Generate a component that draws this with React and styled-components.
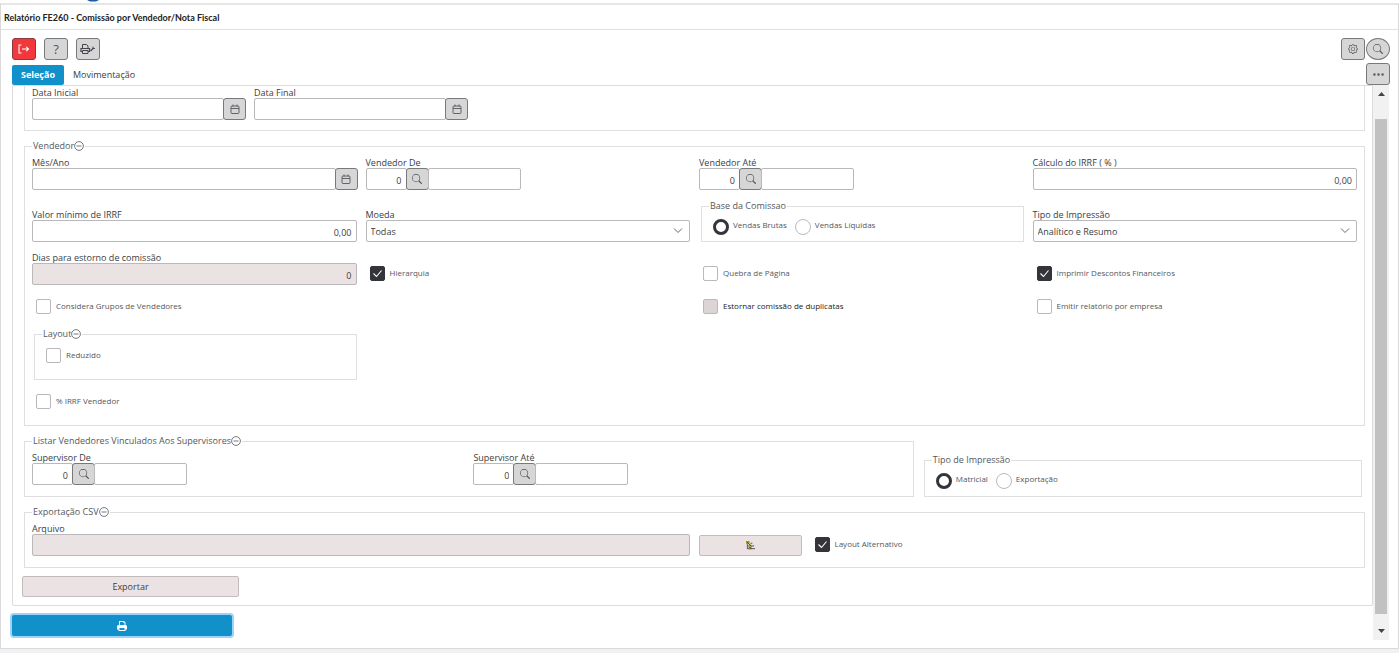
import React from 'react'
import styled, { createGlobalStyle } from 'styled-components'
import { BsGear, BsSearch, BsThreeDots } from 'react-icons/bs'

const GlobalStyle = createGlobalStyle`
    * {
        box-sizing: border-box;
    }
    body {
        margin: 0;
        background-color: #f1f1f4;
        font-family: "Open Sans", "Noto Sans", sans-serif;
        font-size: 9px;
        line-height: 12px;
        color: #3b3d42;
    }
    button, input, select {
        font: inherit;
        color: inherit;
        margin: 0;
    }
`

// Page
const TopStrip = styled.div`
    height: 3px;
    padding-left: 86px;
    background-color: #fff;
`
const LogoEdge = styled.svg`
    display: block;
`
const Window = styled.main`
    display: flex;
    flex-direction: column;
    min-height: calc(100vh - 7px);
    background-color: #fff;
    border: 1px solid #d9d9db;
    border-top: 2px solid #e6e6e7;
`
const TitleBar = styled.h1`
    margin: 0;
    padding: 7px 3px 5px;
    border-bottom: 1px solid #e1e1e3;
    font-family: Lato, sans-serif;
    font-size: 9px;
    line-height: 12px;
    font-weight: 700;
    color: #222;
`
const Toolbar = styled.div`
    display: flex;
    justify-content: space-between;
    padding: 8px 8px 0 11px;
`
const ToolGroup = styled.div`
    display: flex;
    gap: ${props => props.$gap || '1px'};
`
const ToolButton = styled.button`
    display: flex;
    align-items: center;
    justify-content: center;
    width: 24px;
    height: 22px;
    padding: 0;
    border: 1px solid ${props => (props.$danger ? '#8c3a3e' : '#77797d')};
    border-radius: ${props => (props.$round ? '50%' : '3px')};
    background-color: ${props => (props.$danger ? '#f2383c' : '#d6d6d6')};
    color: ${props => (props.$danger ? '#fff' : '#55575c')};
    font-size: 13px;
`
const TabBar = styled.div`
    display: flex;
    align-items: flex-end;
    justify-content: space-between;
    padding: 3px 8px 0 11px;
`
const Tabs = styled.div`
    display: flex;
`
const Tab = styled.button`
    height: 20px;
    padding: 0 9px;
    border: 0;
    border-radius: 2px;
    background-color: ${props => (props.$active ? '#1190ca' : 'transparent')};
    color: ${props => (props.$active ? '#fff' : '#3b3d42')};
    font-weight: ${props => (props.$active ? 700 : 400)};
`

// Scrolling area
const Body = styled.div`
    display: flex;
    flex: 1;
    padding: 0 9px 8px 11px;
`
const Content = styled.div`
    flex: 1;
    min-width: 0;
`
const Panel = styled.div`
    padding: 0 7px 8px 9px;
    border: 1px solid #dcdcde;
    border-radius: 0 0 2px 2px;
`
const Sections = styled.div`
    display: flex;
    flex-direction: column;
    gap: 8px;
    padding-left: 2px;
`
const Scrollbar = styled.div`
    display: flex;
    flex-direction: column;
    width: 16px;
    padding: 7px 2px;
    background-color: #f1f1f1;
`
const ScrollThumb = styled.div`
    flex: 1;
    margin: 23px 0 15px;
    background-color: #c1c1c1;
`
const ScrollArrow = styled.svg`
    display: block;
    margin: 0 auto;
`

// Form parts
const Group = styled.fieldset`
    min-width: 0;
    margin: 0;
    padding: 3px 7px ${props => props.$bottom || '11px'};
    border: 1px solid #dfdfe1;
`
const DateGroup = styled(Group)`
    display: flex;
    gap: 9px;
    padding-top: 0;
    border-top: 0;
`
const InnerGroup = styled(Group)`
    margin: 0 0 0 2px;
    padding-top: 2px;
`
const RadioFieldset = styled(Group)`
    margin: 0 0 0 ${props => props.$indent || '0'};
    padding-top: 6px;
`
const Legend = styled.legend`
    display: flex;
    align-items: center;
    height: 14px;
    padding: 0 1px;
    color: #55575c;
`
const ToggleButton = styled.button`
    display: flex;
    padding: 0;
    border: 0;
    background: none;
`
const Grid = styled.div`
    display: grid;
    grid-template-columns: repeat(${props => props.$cols || 4}, minmax(0, 1fr));
    gap: 9px;
    align-items: end;
`
const SideBySide = styled.div`
    display: grid;
    grid-template-columns: 67fr 33fr;
    align-items: end;
    gap: 10px;
    padding-right: 3px;
`
const Field = styled.div`
    width: ${props => props.$width || 'auto'};
`
const Label = styled.label`
    display: block;
    height: 12px;
    line-height: 14px;
    white-space: nowrap;
`
const InputLine = styled.div`
    display: flex;
`
const Input = styled.input`
    flex: ${props => (props.$width ? 'none' : 1)};
    width: ${props => props.$width || '100%'};
    min-width: 0;
    height: 22px;
    padding: 2px 4px 0;
    border: 1px solid #b9b9bc;
    border-radius: 2px;
    background-color: #fff;
    text-align: ${props => (props.$right ? 'right' : 'left')};
    outline: none;
    &:disabled {
        background-color: #ebe3e3;
        color: #3b3d42;
    }
`
const InputButton = styled(ToolButton)`
    flex: none;
    width: 23px;
    margin: 0 -1px;
`
const Select = styled.select`
    display: block;
    width: 100%;
    height: 22px;
    padding: 2px 4px 0;
    border: 1px solid #b9b9bc;
    border-radius: 2px;
    appearance: none;
    background: #fff url("data:image/svg+xml,%3Csvg xmlns='http://www.w3.org/2000/svg' width='10' height='6' fill='none' stroke='%2366686c'%3E%3Cpath d='M1 .5l4 4 4-4'/%3E%3C/svg%3E") no-repeat right 6px center;
`
const CheckLabel = styled.label`
    display: flex;
    align-items: center;
    gap: 5px;
    height: 24px;
    padding-left: 4px;
    font-size: 8px;
    color: ${props => (props.$strong ? '#222' : '#55575c')};
    grid-column: ${props => props.$col || 'auto'};
`
const CheckBox = styled.input`
    appearance: none;
    flex: none;
    width: 15px;
    height: 15px;
    border: 1px solid #b9b9bc;
    border-radius: 2px;
    background-color: #fff;
    &:checked {
        border-color: #33353b;
        background: #33353b url("data:image/svg+xml,%3Csvg xmlns='http://www.w3.org/2000/svg' width='11' height='9' fill='none' stroke='white' stroke-width='1.1'%3E%3Cpath d='M1.500 4.500l3 3 5-6'/%3E%3C/svg%3E") no-repeat center;
    }
    &:disabled {
        background-color: #ddd5d5;
    }
`
const Radios = styled.div`
    display: flex;
    gap: 8px;
    padding-left: 4px;
`
const RadioLabel = styled.label`
    display: flex;
    gap: 4px;
    font-size: 8px;
    color: #55575c;
`
const Radio = styled.input`
    appearance: none;
    width: 16px;
    height: 16px;
    border: 1px solid #b9b9bc;
    border-radius: 50%;
    &:checked {
        border: 3px solid #33353b;
    }
`
const FileRow = styled.div`
    display: flex;
    align-items: flex-end;
    gap: 9px;
`
const SoftButton = styled.button`
    display: flex;
    align-items: center;
    justify-content: center;
    width: ${props => props.$width};
    height: 21px;
    padding: 0;
    border: 1px solid #c3bcbc;
    border-radius: 2px;
    background-color: #ebe3e3;
`
const ExportButton = styled(SoftButton)`
    margin-top: 8px;
`
const PrintButton = styled.button`
    display: flex;
    align-items: center;
    justify-content: center;
    width: 220px;
    height: 21px;
    margin-top: 9px;
    padding: 0;
    border: 0;
    border-radius: 2px;
    background-color: #1190ca;
    box-shadow: 0 0 0 2px #9bd3fb;
`

const MinusIcon = () => (
  <svg width='10' height='10' viewBox='0 0 10 10' fill='none' stroke='#55575c'>
    <circle cx='5' cy='5' r='4.400' strokeWidth='.8' />
    <path d='M2.500 5h5' strokeWidth='.8' />
  </svg>
)

const ExitIcon = () => (
  <svg width='12' height='10' viewBox='0 0 12 10' fill='none' stroke='currentColor' strokeWidth='1.100'>
    <path d='M3.500 1H1v8h2.500' />
    <path d='M4 5h6.500M8.300 2.800L10.500 5 8.300 7.200' />
  </svg>
)

const CalendarIcon = () => (
  <svg width='10' height='11' viewBox='0 0 10 11' fill='none' stroke='currentColor' strokeWidth='.9'>
    <rect x='1' y='2' width='8' height='7.500' rx='1' />
    <path d='M1 4.500h8M3 .5v2M7 .5v2' />
  </svg>
)

const PrintSetupIcon = () => (
  <svg width='16' height='12' viewBox='0 0 16 12' fill='none' stroke='#44464b'>
    <path d='M2.500 5V1.500h4L8 3v2' />
    <path d='M2.500 8.500H1v-3h8.500v3H8' strokeWidth='1.200' />
    <path d='M2.500 7.500H8v3H2.500z' />
    <path d='M10.500 8l3-3' strokeWidth='1.300' />
    <path d='M13 3.500v2h2' strokeWidth='.9' />
  </svg>
)

const PrinterIcon = () => (
  <svg width='10' height='10' viewBox='0 0 10 10' fill='#fff'>
    <path fillRule='evenodd' d='M2 0h5l1.500 1.500V4H9l1 1v3.500H8.500V10h-7V8.500H0V5l1-1h1zM3 1v3h4.500V2H6.500V1zM2.500 7v2h5V7z' />
  </svg>
)

const TreeIcon = () => (
  <svg width='9' height='9' viewBox='0 0 10 10' fill='none'>
    <path d='M1.500 2v7M1.500 5.500h3M1.500 8.500h3' stroke='#555' />
    <path d='M0 0h4v3H0zM3 4h3v2.500H3zM3 7h3v2.500H3z' fill='#a29a2c' />
    <path d='M1 1l5 5M5 2.500h2M6 5.500h3M5 8.500h5M3 7.500h3' stroke='#44464b' />
  </svg>
)

const GroupTitle = ({ text }) => (
  <Legend>
    {text}
    <ToggleButton type='button' aria-label={`Recolher ${text}`}><MinusIcon /></ToggleButton>
  </Legend>
)

const DateField = ({ id, label, width }) => (
  <Field $width={width}>
    <Label htmlFor={id}>{label}</Label>
    <InputLine>
      <Input id={id} type='text' />
      <InputButton type='button' aria-label='Calendário'><CalendarIcon /></InputButton>
    </InputLine>
  </Field>
)

const NumberField = ({ id, label, value, disabled }) => (
  <Field>
    <Label htmlFor={id}>{label}</Label>
    <InputLine>
      <Input id={id} type='text' defaultValue={value} disabled={disabled} $right />
    </InputLine>
  </Field>
)

const LookupField = ({ id, label }) => (
  <Field>
    <Label htmlFor={id}>{label}</Label>
    <InputLine>
      <Input id={id} type='text' defaultValue='0' $width='41px' $right />
      <InputButton type='button' aria-label='Pesquisar'><BsSearch size={10} /></InputButton>
      <Input type='text' aria-label={`${label} nome`} $width='93px' />
    </InputLine>
  </Field>
)

const SelectField = ({ id, label, options }) => (
  <Field>
    <Label htmlFor={id}>{label}</Label>
    <Select id={id}>
      {options.map(option => <option key={option}>{option}</option>)}
    </Select>
  </Field>
)

const Check = ({ label, checked, disabled, col }) => (
  <CheckLabel $col={col} $strong={disabled}>
    <CheckBox type='checkbox' defaultChecked={checked} disabled={disabled} />
    {label}
  </CheckLabel>
)

const RadioGroup = ({ name, title, options, indent, bottom }) => (
  <RadioFieldset $indent={indent} $bottom={bottom}>
    <Legend>{title}</Legend>
    <Radios>
      {options.map((option, index) => (
        <RadioLabel key={option}>
          <Radio type='radio' name={name} defaultChecked={index === 0} />
          {option}
        </RadioLabel>
      ))}
    </Radios>
  </RadioFieldset>
)

const App = () => {
  return (
    <>
      <GlobalStyle />
      <TopStrip>
        <LogoEdge width='14' height='2' viewBox='0 0 14 2'>
          <path d='M1 0h12L10 1.500H4z' fill='#1d5ba6' />
        </LogoEdge>
      </TopStrip>
      <Window>
        <TitleBar>Relatório FE260 - Comissão por Vendedor/Nota Fiscal</TitleBar>
        <Toolbar>
          <ToolGroup $gap='8px'>
            <ToolButton type='button' aria-label='Sair' $danger><ExitIcon /></ToolButton>
            <ToolButton type='button' aria-label='Ajuda'>?</ToolButton>
            <ToolButton type='button' aria-label='Configurar impressão'><PrintSetupIcon /></ToolButton>
          </ToolGroup>
          <ToolGroup>
            <ToolButton type='button' aria-label='Configurações'><BsGear size={10} /></ToolButton>
            <ToolButton type='button' aria-label='Pesquisar' $round><BsSearch size={10} /></ToolButton>
          </ToolGroup>
        </Toolbar>
        <TabBar>
          <Tabs>
            <Tab type='button' $active>Seleção</Tab>
            <Tab type='button'>Movimentação</Tab>
          </Tabs>
          <ToolButton type='button' aria-label='Mais opções'><BsThreeDots /></ToolButton>
        </TabBar>
        <Body>
          <Content>
            <Panel>
              <Sections>
                <DateGroup $bottom='10px'>
                  <DateField id='data-inicial' label='Data Inicial' width='213px' />
                  <DateField id='data-final' label='Data Final' width='213px' />
                </DateGroup>

                <Group $bottom='12px'>
                  <GroupTitle text='Vendedor' />
                  <Grid>
                    <DateField id='mes-ano' label='Mês/Ano' />
                    <LookupField id='vendedor-de' label='Vendedor De' />
                    <LookupField id='vendedor-ate' label='Vendedor Até' />
                    <NumberField id='irrf' label='Cálculo do IRRF ( % )' value='0,00' />

                    <NumberField id='valor-minimo' label='Valor mínimo de IRRF' value='0,00' />
                    <SelectField id='moeda' label='Moeda' options={['Todas']} />
                    <RadioGroup
                      name='base'
                      title='Base da Comissao'
                      options={['Vendas Brutas', 'Vendas Líquidas']}
                      indent='2px'
                      bottom='6px'
                    />
                    <SelectField id='tipo' label='Tipo de Impressão' options={['Analítico e Resumo']} />

                    <NumberField id='dias' label='Dias para estorno de comissão' value='0' disabled />
                    <Check label='Hierarquia' checked />
                    <Check label='Quebra de Página' />
                    <Check label='Imprimir Descontos Financeiros' checked />

                    <Check label='Considera Grupos de Vendedores' />
                    <Check label='Estornar comissão de duplicatas' col='3' disabled />
                    <Check label='Emitir relatório por empresa' />

                    <InnerGroup $bottom='12px'>
                      <GroupTitle text='Layout' />
                      <Check label='Reduzido' />
                    </InnerGroup>

                    <Check label='% IRRF Vendedor' col='1' />
                  </Grid>
                </Group>

                <SideBySide>
                  <Group>
                    <GroupTitle text='Listar Vendedores Vinculados Aos Supervisores' />
                    <Grid $cols={2}>
                      <LookupField id='supervisor-de' label='Supervisor De' />
                      <LookupField id='supervisor-ate' label='Supervisor Até' />
                    </Grid>
                  </Group>
                  <RadioGroup
                    name='saida'
                    title='Tipo de Impressão'
                    options={['Matricial', 'Exportação']}
                    bottom='7px'
                  />
                </SideBySide>

                <Group>
                  <GroupTitle text='Exportação CSV' />
                  <FileRow>
                    <Field $width='calc(50% - 5px)'>
                      <Label htmlFor='arquivo'>Arquivo</Label>
                      <InputLine>
                        <Input id='arquivo' type='text' disabled />
                      </InputLine>
                    </Field>
                    <SoftButton type='button' aria-label='Procurar arquivo' $width='103px'><TreeIcon /></SoftButton>
                    <Check label='Layout Alternativo' checked />
                  </FileRow>
                </Group>
              </Sections>
              <ExportButton type='button' $width='217px'>Exportar</ExportButton>
            </Panel>
            <PrintButton type='button' aria-label='Imprimir'><PrinterIcon /></PrintButton>
          </Content>
          <Scrollbar aria-hidden='true'>
            <ScrollArrow width='7' height='4' viewBox='0 0 7 4'><path d='M0 4l3.500-4L7 4z' fill='#444' /></ScrollArrow>
            <ScrollThumb />
            <ScrollArrow width='7' height='4' viewBox='0 0 7 4'><path d='M0 0l3.500 4L7 0z' fill='#444' /></ScrollArrow>
          </Scrollbar>
        </Body>
      </Window>
    </>
  )
}

export default App
